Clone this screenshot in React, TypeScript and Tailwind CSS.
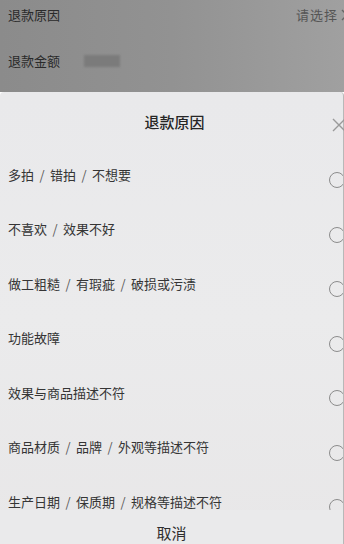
import React from 'react';

const reasons = [
  '多拍 / 错拍 / 不想要',
  '不喜欢 / 效果不好',
  '做工粗糙 / 有瑕疵 / 破损或污渍',
  '功能故障',
  '效果与商品描述不符',
  '商品材质 / 品牌 / 外观等描述不符',
  '生产日期 / 保质期 / 规格等描述不符',
];

const cjk = "font-['Noto_Sans_CJK_SC','Noto_Sans',sans-serif]";

function ReasonText({ text }: { text: string }) {
  const parts = text.split(' / ');
  return (
    <span className="flex items-center whitespace-nowrap">
      {parts.map((p, i) => (
        <React.Fragment key={i}>
          {i > 0 && <span className="w-[16px] text-center text-[#5a5a5a]">/</span>}
          <span>{p}</span>
        </React.Fragment>
      ))}
    </span>
  );
}

export default function App() {
  return (
    <div className={`w-[344px] h-[544px] overflow-hidden flex flex-col ${cjk}`}>
      {/* dimmed page behind the sheet */}
      <div className="h-[92px] flex flex-col bg-gradient-to-r from-[#8b8b8b] via-[#929292] to-[#a0a0a0]">
        <div className="h-[30px] flex items-center justify-between pl-[8px]">
          <span className="text-[13px] text-[#2a2a2a]">退款原因</span>
          <span className="flex items-center gap-[3px] mr-[-4px]">
            <span className="text-[13px] text-[#555] tracking-[1px]">请选择</span>
            <svg width="7" height="12" viewBox="0 0 7 12">
              <path d="M1 1 L6 6 L1 11" stroke="#666" strokeWidth="1.4" fill="none" />
            </svg>
          </span>
        </div>
        <div className="h-[44px] mt-[6px] flex items-center pl-[8px] gap-[24px] pt-[6px]">
          <span className="text-[13px] text-[#2a2a2a]">退款金额</span>
          <span className="w-[36px] h-[12px] bg-[#7b7b7b] blur-[1px]" />
        </div>
      </div>

      {/* bottom sheet */}
      <div className="flex-1 flex flex-col bg-gradient-to-b from-[#e9e9eb] via-[#ebebec] to-[#e8e7e8] border-r border-[#b8b8b8] rounded-t-[4px]">
        <div className="relative h-[56px] flex items-center justify-center pt-[4px] pl-[6px]">
          <span className="text-[15px] font-medium text-[#262626]">退款原因</span>
          <svg className="absolute right-[-4px] top-[25px]" width="16" height="16" viewBox="0 0 16 16">
            <path d="M2 2 L14 14 M14 2 L2 14" stroke="#9a9a9a" strokeWidth="1.4" fill="none" />
          </svg>
        </div>

        <div className="h-[362px] overflow-hidden">
          {reasons.map((r) => (
            <div key={r} className="h-[54.5px] flex items-center justify-between pl-[8px]">
              <span className="text-[13px] text-[#353535] mb-[2px]">
                <ReasonText text={r} />
              </span>
              <span className="w-[16px] h-[16px] mt-[10px] mr-[-2px] rounded-full border-[1.5px] border-[#8c8c8c] shrink-0" />
            </div>
          ))}
        </div>

        <div className="flex-1 flex justify-center pt-[14px] bg-[#eaeaeb]">
          <span className="text-[15px] leading-[18px] text-[#2e2e2e]">取消</span>
        </div>
      </div>
    </div>
  );
}
